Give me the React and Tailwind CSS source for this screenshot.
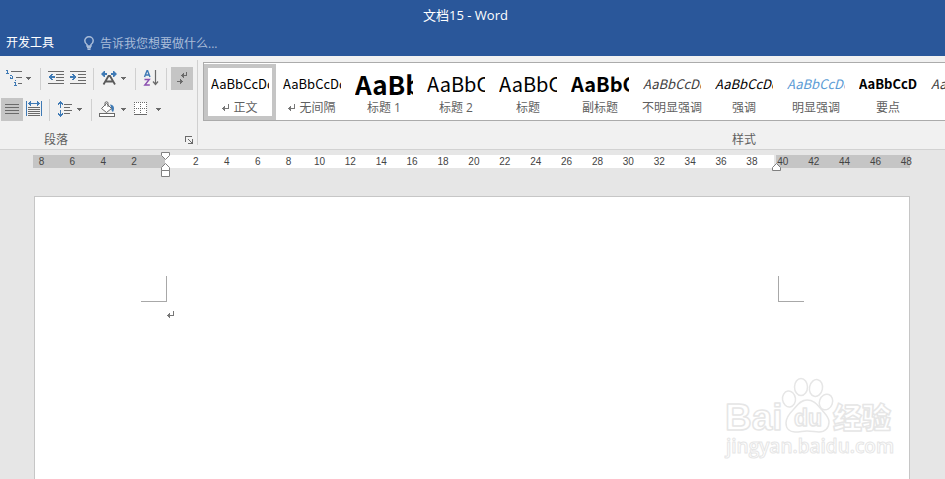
import React from "react";

const BLUE = "#3f7ab5";
const GREY = "#6a6a6a";

function Icon({ children, label }) {
  return (
    <svg width="18" height="17" viewBox="-1 0 18 17" fill="none" shapeRendering="crispEdges" role="img" aria-label={label} className="shrink-0">
      {children}
    </svg>
  );
}

function Caret() {
  return (
    <svg width="5" height="3" viewBox="0 0 5 3" shapeRendering="crispEdges" className="shrink-0" aria-hidden="true">
      <path d="M0 0h5v1H4v1H3v1H2V2H1V1H0z" fill={GREY} />
    </svg>
  );
}

function Tool({ active, children }) {
  return (
    <button type="button" className={"flex h-[23px] w-[22px] items-center justify-center " + (active ? "bg-[#c5c5c5]" : "")}>
      {children}
    </button>
  );
}

function DropTool({ wide, children }) {
  return (
    <button type="button" className={"mr-0.5 flex h-[23px] items-center justify-between pl-0.5 pr-[3px] " + (wide ? "w-[33px]" : "w-[31px]")}>
      {children}
      <Caret />
    </button>
  );
}

function Sep() {
  return <span className="mx-1 h-[22px] w-px shrink-0 bg-[#d0d0d0]" />;
}

function ReturnMark() {
  return (
    <svg width="7" height="7" viewBox="0 0 7 7" shapeRendering="crispEdges" aria-hidden="true" className="shrink-0">
      <path d="M6 0h1v5H3v2H2V6H1V5H0V4h1V3h1V2h1v2h3z" fill="#777" />
    </svg>
  );
}

function Paragraph() {
  return (
    <section aria-label="段落" className="flex w-[197px] shrink-0 flex-col pt-[11px]">
      <div className="flex items-center pl-[3px]">
        <DropTool>
          <Icon label="多级列表">
            <path d="M1.500 0v4M0 .5h1M0 3.500h3M4 5.500h2M6.500 6v3M4 8.500h3M4.500 7v2M9.500 12v4M8 12.500h1M8 15.500h3M9 10.500h1" stroke={BLUE} />
            <path d="M5 1.500h11M10 7.500h6M12 13.500h4" stroke={GREY} />
          </Icon>
        </DropTool>
        <Sep />
        <Tool>
          <Icon label="减少缩进量">
            <path d="M0 1.500h16M8 4.500h8M8 7.500h8M8 10.500h8M0 13.500h16" stroke={GREY} />
            <path d="M0 7h1V6h1V5h1V4h2v1H4v1h3v2H4v1h1v1H3V9H2V8H1V7z" fill={BLUE} />
          </Icon>
        </Tool>
        <Tool>
          <Icon label="增加缩进量">
            <path d="M0 1.500h16M8 4.500h8M8 7.500h8M8 10.500h8M0 13.500h16" stroke={GREY} />
            <path d="M7 7H6V6H5V5H4V4H2v1h1v1H0v2h3v1H2v1h2V9h1V8h1V7z" fill={BLUE} />
          </Icon>
        </Tool>
        <Sep />
        <DropTool>
          <Icon label="中文版式">
            <g shapeRendering="auto">
              <path d="M2.500 14.500L7.500 6h1.500L14 14.500M4.500 11.500h7.500" stroke="#5a5a5a" strokeWidth="1.800" />
              <path d="M0 4l3-3h1v2h2v2H4v2H3zM16 4l-3-3h-1v2h-2v2h2v2h1z" fill={BLUE} />
            </g>
          </Icon>
        </DropTool>
        <Sep />
        <Tool>
          <Icon label="排序">
            <g shapeRendering="auto">
              <path d="M1.500 7L4 .8h.6L7 7M2.500 5h3.600" stroke={BLUE} strokeWidth="1.400" />
              <path d="M1.500 9.500h4.800L1.800 15h5" stroke="#8b4fb0" strokeWidth="1.400" />
              <path d="M12.500 0v14M10 11.500l2.500 3 2.500-3" stroke={GREY} strokeWidth="1.200" />
            </g>
          </Icon>
        </Tool>
        <Sep />
        <Tool active>
          <Icon label="显示编辑标记">
            <path d="M12 2h1v4H10v2H9V7H8V6H7V5h1V4h1V3h1v2h2z" fill={GREY} />
            <path d="M3 11h3V9h1v1h1v1h1v1H8v1H7v1H6v-2H3z" fill={GREY} />
          </Icon>
        </Tool>
      </div>
      <div className="mt-2 flex items-center pl-px">
        <Tool active>
          <Icon label="两端对齐">
            <path d="M1 3.500h14M1 6.500h14M1 9.500h14M1 12.500h14" stroke={GREY} />
          </Icon>
        </Tool>
        <Tool>
          <Icon label="分散对齐">
            <path d="M.5 0v15M15.500 0v15" stroke={BLUE} />
            <path d="M2 2h1V1h1V0h1v2h6V0h1v1h1v1h1v1h-1v1h-1v1h-1V3H5v2H4V4H3V3H2z" fill={BLUE} />
            <path d="M2 6.500h12M2 8.500h12M2 10.500h12M2 12.500h12M2 14.500h12" stroke={GREY} />
          </Icon>
        </Tool>
        <Sep />
        <DropTool>
          <Icon label="行距">
            <path d="M7 3.500h8M7 6.500h6M7 9.500h8M7 12.500h6" stroke={GREY} />
            <path d="M3 0h1v1h1v1h1v2H5V3H4v4H3V3H2v1H1V2h1V1h1zM3 9h1v4h1v-1h1v2H5v1H4v1H3v-1H2v-1H1v-2h1v1h1z" fill={BLUE} />
          </Icon>
        </DropTool>
        <Sep />
        <DropTool wide>
          <Icon label="底纹">
            <g shapeRendering="auto">
              <path d="M11 3.500c4 0 5 4 3 7.500-1.500-.5-2-3-2-5z" fill={BLUE} />
              <path d="M2.500 7.500L7.500 2.500l5 5-5 4z" fill="#fff" stroke={GREY} />
              <path d="M6 5V1.500Q7.500 0 9 1.500V6" stroke={GREY} />
            </g>
            <rect x=".5" y="12.500" width="15" height="3" fill="#fff" stroke={GREY} />
          </Icon>
        </DropTool>
        <DropTool wide>
          <Icon label="边框">
            <rect x="0" y="1" width="13" height="13" fill="#fff" />
            <path d="M0 1.500h13M0 7.500h13M.5 1v12M6.500 1v12M12.500 1v12" stroke={GREY} strokeDasharray="1 1" />
            <path d="M0 13.500h13" stroke={GREY} />
          </Icon>
        </DropTool>
      </div>
      <div className="mt-[10px] flex h-[18px] items-center justify-between pl-11 pr-1">
        <span className="text-xs text-[#5f5f5f]">段落</span>
        <button type="button" aria-label="段落设置">
          <svg width="8" height="8" viewBox="0 0 8 8" fill="none" shapeRendering="crispEdges">
            <path d="M.5 6V.5H7M3 3l4 4M7.500 3v4.500H3" stroke={GREY} />
          </svg>
        </button>
      </div>
    </section>
  );
}

const STYLES = [
  { name: "正文", sample: "AaBbCcDd", mark: true, selected: true, look: "text-[13px] text-black" },
  { name: "无间隔", sample: "AaBbCcDd", mark: true, look: "text-[13px] text-black" },
  { name: "标题 1", sample: "AaBb", look: "text-[26px] font-bold text-black" },
  { name: "标题 2", sample: "AaBbC", look: "text-[20px] text-black" },
  { name: "标题", sample: "AaBbC", look: "text-[20px] text-black" },
  { name: "副标题", sample: "AaBbC", look: "text-[20px] font-bold text-black" },
  { name: "不明显强调", sample: "AaBbCcDd", look: "text-[13px] italic text-[#404040]" },
  { name: "强调", sample: "AaBbCcDd", look: "text-[13px] italic text-black" },
  { name: "明显强调", sample: "AaBbCcDd", look: "text-[13px] italic text-[#5b9bd5]" },
  { name: "要点", sample: "AaBbCcDd", look: "text-[13px] font-bold text-black" },
  { name: "引用", sample: "AaBbCcDd", look: "text-[13px] italic text-[#404040]" },
];

function StyleGallery() {
  return (
    <section aria-label="样式" className="flex min-w-0 flex-1 flex-col pl-[5px] pt-1.5">
      <div className="flex h-[60px] items-center overflow-hidden border border-r-0 border-[#ababab] bg-white">
        {STYLES.map((s) => (
          <button
            key={s.name}
            type="button"
            className={"flex h-14 w-[72px] shrink-0 flex-col border-4 " + (s.selected ? "border-[#c5c5c5]" : "border-transparent")}
          >
            <span className={"ml-[3px] block h-8 w-[58px] overflow-hidden whitespace-nowrap text-left font-['Noto_Sans_CJK_SC',sans-serif] leading-[31px] " + s.look}>
              {s.sample}
            </span>
            <span className="flex h-4 w-full items-center justify-center gap-1 whitespace-nowrap text-xs leading-4 text-[#5f5f5f]">
              {s.mark && <ReturnMark />}
              {s.name}
            </span>
          </button>
        ))}
      </div>
      <div className="mt-[10px] flex h-[18px] items-center justify-center pl-[340px] text-xs text-[#5f5f5f]">样式</div>
    </section>
  );
}

const TICKS = [8, 6, 4, 2, "", 2, 4, 6, 8, 10, 12, 14, 16, 18, 20, 22, 24, 26, 28, 30, 32, 34, 36, 38, 40, 42, 44, 46, 48];

function Ruler() {
  return (
    <div className="relative ml-[33px] mr-[35px] mt-[5px] flex h-[13px]">
      <div className="relative grow-[132] bg-[#c5c5c5]">
        <svg width="9" height="25" viewBox="0 0 9 25" className="absolute -right-[5px] -top-[3px] z-10" fill="#fff" stroke="#808080">
          <path d="M.5.5h8v3l-4 4-4-4z" />
          <path d="M.5 18.500v-3l4-4 4 4v3z" />
          <path d="M.5 18.500h8v6h-8z" />
        </svg>
      </div>
      <div className="relative grow-[609] bg-white">
        <svg width="9" height="8" viewBox="0 0 9 8" className="absolute -bottom-[3px] -right-[7px] z-10" fill="#fff" stroke="#808080">
          <path d="M.5 7.500v-3l4-4 4 4v3z" />
        </svg>
      </div>
      <div className="ml-0.5 grow-[134] bg-[#c5c5c5]" />
      <div className="absolute -left-[7px] -right-[12px] top-0 flex font-['Liberation_Sans',sans-serif] text-[10px] leading-[13px] text-[#444]">
        {TICKS.map((t, i) => (
          <span key={i} className="flex-1 text-center">{t}</span>
        ))}
      </div>
    </div>
  );
}

function Watermark() {
  return (
    <svg width="172" height="86" viewBox="0 0 172 86" role="img" aria-label="Baidu 经验" className="absolute right-[13px] top-[178px]" fill="#fff" stroke="#e6e6e6" strokeWidth="1.500" strokeLinejoin="round">
      <text x="1" y="55" fontSize="37" fontWeight="700" fontFamily="Liberation Sans, sans-serif">Bai</text>
      <ellipse cx="65" cy="24" rx="6.500" ry="8" transform="rotate(-8 65 24)" />
      <ellipse cx="77" cy="12" rx="6.500" ry="8.500" />
      <ellipse cx="92" cy="13" rx="6.500" ry="8.500" transform="rotate(12 92 13)" />
      <ellipse cx="102" cy="27" rx="6.500" ry="8" transform="rotate(20 102 27)" />
      <path d="M83 25C76 25 73 31 69 35C65 39 62 43 62 48C62 54 66 57 71 57C76 57 79 56 83 56C88 56 91 57 95 57C101 57 105 53 105 47C105 42 101 39 98 35C94 31 91 25 83 25Z" />
      <text x="70" y="51" fontSize="23" fontWeight="700" fontFamily="Liberation Sans, sans-serif">du</text>
      <text x="109" y="54" fontSize="29" fontWeight="900" fontFamily="Noto Sans CJK SC, sans-serif">经验</text>
      <text x="2" y="78" fontSize="19" fontWeight="600" strokeWidth="1" fontFamily="Open Sans, sans-serif">jingyan.baidu.com</text>
    </svg>
  );
}

export default function App() {
  return (
    <div className="flex min-h-screen flex-col overflow-hidden bg-[#e6e6e6] font-['Open_Sans','Noto_Sans_CJK_SC',sans-serif]">
      <header className="bg-[#2a579a] text-white">
        <h1 className="flex h-8 items-center justify-center pr-3.5 text-[13px]">文档15 - Word</h1>
        <nav className="flex h-6 items-start">
          <a href="#developer" className="pl-1.5 text-xs leading-[22px]">开发工具</a>
          <label className="ml-[30px] flex items-center gap-1.5 text-[#a9bcd8]">
            <svg width="10" height="14" viewBox="0 0 10 14" fill="none" stroke="currentColor" strokeWidth="1.500" role="img" aria-label="操作说明搜索">
              <path d="M3 10V8.500C1.500 7.500.8 6.300.8 4.800.8 2.500 2.600.8 5 .8s4.200 1.700 4.200 4C9.200 6.300 8.500 7.500 7 8.500V10zM3 11.500h4M3.500 13.300h3" />
            </svg>
            <input type="text" placeholder="告诉我您想要做什么..." className="h-[22px] w-40 bg-transparent text-xs outline-none placeholder:text-[#a9bcd8]" />
          </label>
        </nav>
      </header>

      <div className="flex h-[94px] border-b border-[#d2d2d2] bg-[#f1f1f1]">
        <Paragraph />
        <span className="my-1 w-px shrink-0 bg-[#d0d0d0]" />
        <StyleGallery />
      </div>

      <Ruler />

      <main className="relative ml-[34px] mr-[35px] mt-7 min-h-[283px] flex-1 border border-b-0 border-[#c6c6c6] bg-white">
        <div className="flex justify-between pl-[106px] pr-[105px] pt-[79px]">
          <span className="h-[26px] w-[26px] border-b border-r border-[#a8a8a8]" />
          <span className="h-[26px] w-[26px] border-b border-l border-[#a8a8a8]" />
        </div>
        <p className="pl-[132px] pt-[9px]">
          <ReturnMark />
        </p>
        <Watermark />
      </main>
    </div>
  );
}
